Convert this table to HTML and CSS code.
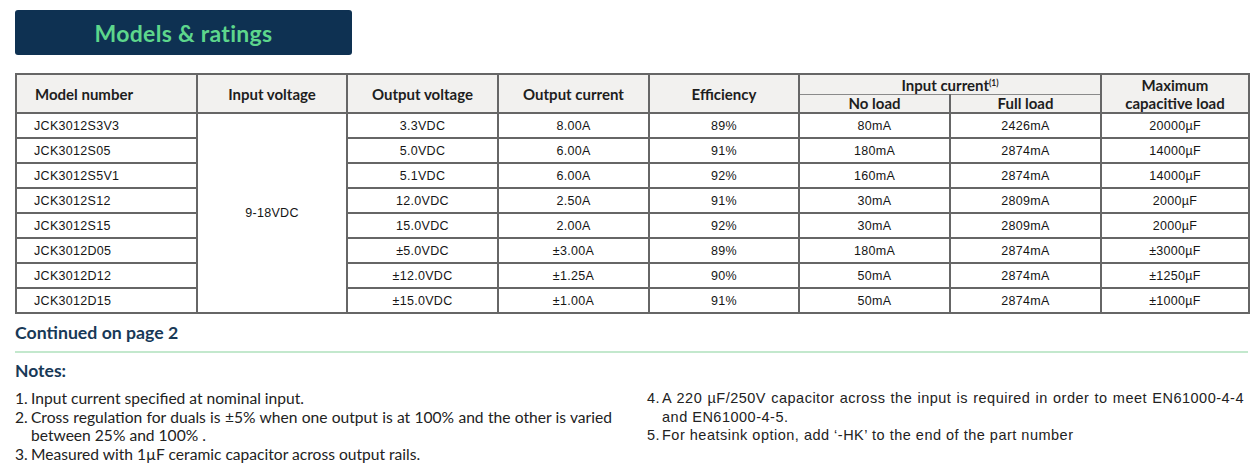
FILE: index.html
```html
<!DOCTYPE html>
<html>
<head>
<meta charset="utf-8">
<link rel="stylesheet" href="styles.css">
</head>
<body>
<div class="page">
  <div class="title">Models &amp; ratings</div>
  <table class="models">
    <colgroup>
      <col class="c1"><col class="c2"><col class="c3"><col class="c4"><col class="c5"><col class="c6"><col class="c7"><col class="c8">
    </colgroup>
    <thead>
      <tr class="h1">
        <th rowspan="2" class="left">Model number</th>
        <th rowspan="2">Input voltage</th>
        <th rowspan="2">Output voltage</th>
        <th rowspan="2">Output current</th>
        <th rowspan="2">Efficiency</th>
        <th colspan="2" class="group">Input current<sup>(1)</sup></th>
        <th rowspan="2" class="maxcap">Maximum<br>capacitive load</th>
      </tr>
      <tr class="h2">
        <th class="sub subl">No load</th>
        <th class="sub">Full load</th>
      </tr>
    </thead>
    <tbody>
      <tr><td class="left">JCK3012S3V3</td><td rowspan="8" class="vin">9-18VDC</td><td>3.3VDC</td><td>8.00A</td><td>89%</td><td>80mA</td><td>2426mA</td><td>20000µF</td></tr>
      <tr><td class="left">JCK3012S05</td><td>5.0VDC</td><td>6.00A</td><td>91%</td><td>180mA</td><td>2874mA</td><td>14000µF</td></tr>
      <tr><td class="left">JCK3012S5V1</td><td>5.1VDC</td><td>6.00A</td><td>92%</td><td>160mA</td><td>2874mA</td><td>14000µF</td></tr>
      <tr><td class="left">JCK3012S12</td><td>12.0VDC</td><td>2.50A</td><td>91%</td><td>30mA</td><td>2809mA</td><td>2000µF</td></tr>
      <tr><td class="left">JCK3012S15</td><td>15.0VDC</td><td>2.00A</td><td>92%</td><td>30mA</td><td>2809mA</td><td>2000µF</td></tr>
      <tr><td class="left">JCK3012D05</td><td>±5.0VDC</td><td>±3.00A</td><td>89%</td><td>180mA</td><td>2874mA</td><td>±3000µF</td></tr>
      <tr><td class="left">JCK3012D12</td><td>±12.0VDC</td><td>±1.25A</td><td>90%</td><td>50mA</td><td>2874mA</td><td>±1250µF</td></tr>
      <tr><td class="left">JCK3012D15</td><td>±15.0VDC</td><td>±1.00A</td><td>91%</td><td>50mA</td><td>2874mA</td><td>±1000µF</td></tr>
    </tbody>
  </table>
  <div class="continued">Continued on page 2</div>
  <div class="rule"></div>
  <div class="notes-title">Notes:</div>
  <div class="notes">
    <ol class="col-a">
      <li><span class="n">1.</span><span class="t">Input current specified at nominal input.</span></li>
      <li><span class="n">2.</span><span class="t">Cross regulation for duals is ±5% when one output is at 100% and the other is varied between 25% and 100% .</span></li>
      <li><span class="n">3.</span><span class="t">Measured with 1µF ceramic capacitor across output rails.</span></li>
    </ol>
    <ol class="col-b">
      <li><span class="n">4.</span><span class="t">A 220 µF/250V capacitor across the input is required in order to meet EN61000-4-4 and EN61000-4-5.</span></li>
      <li><span class="n">5.</span><span class="t">For heatsink option, add ‘-HK’ to the end of the part number</span></li>
    </ol>
  </div>
</div>
</body>
</html>
```
FILE: styles.css
```css
* { box-sizing: border-box; }
html, body { margin: 0; padding: 0; background: #ffffff; }
.page {
  padding: 10px 12px 0 15px;
  font-family: Lato, "Liberation Sans", sans-serif;
  color: #1f1f1f;
}
.title {
  width: 337px;
  height: 45px;
  background: #0e3152;
  border-radius: 3px;
  color: #5dd68c;
  font-family: Lato, sans-serif;
  font-weight: 700;
  font-size: 23px;
  letter-spacing: 0.3px;
  display: flex;
  align-items: center;
  justify-content: center;
}
.models {
  margin-top: 18px;
  width: 1233px;
  border-collapse: collapse;
  table-layout: fixed;
  border: 2px solid #666666;
}
.c1 { width: 181px; }
.c2 { width: 150px; }
.c3 { width: 151px; }
.c4 { width: 151px; }
.c5 { width: 150px; }
.c6 { width: 151px; }
.c7 { width: 151px; }
.c8 { width: 148px; }
.models th {
  background: #f2f1ef;
  font-family: Lato, sans-serif;
  font-weight: 700;
  font-size: 15px;
  color: #1e1e1e;
  border: 2px solid #666666;
  padding: 0;
  text-align: center;
  line-height: 18px;
}
.models .h1 th { height: 18px; }
.models .h2 th { height: 18px; }
.models th.left { text-align: left; padding-left: 18px; }
.models th.group { border-bottom: 1px solid #8a8a8a; vertical-align: bottom; line-height: 18px; }
.models th.sub { border-top: 1px solid #8a8a8a; vertical-align: top; line-height: 17px; }
.models th.subl { border-right: 1px solid #9a9a9a; }
.models th.maxcap { line-height: 18px; padding-top: 1px; }
.models sup { font-size: 8.5px; vertical-align: 5px; line-height: 0; font-weight: 700; }
.models td {
  font-family: "Liberation Sans", Arial, sans-serif;
  font-size: 12.5px;
  letter-spacing: 0.3px;
  color: #151515;
  border: 2px solid #666666;
  height: 25px;
  padding: 0;
  text-align: center;
  vertical-align: middle;
}
.models td.left { text-align: left; padding-left: 17px; }
.continued {
  margin-top: 8px;
  font-family: Lato, sans-serif;
  font-weight: 700;
  font-size: 17.7px;
  color: #183957;
  line-height: 22px;
}
.rule {
  margin-top: 7px;
  width: 1233px;
  height: 2px;
  background: #c3e8cd;
}
.notes-title {
  margin-top: 7px;
  font-family: Lato, sans-serif;
  font-weight: 700;
  font-size: 17.5px;
  color: #183957;
  line-height: 22px;
}
.notes {
  margin-top: 7px;
  display: grid;
  grid-template-columns: 632px 600px;
}
.notes ol {
  margin: 0;
  padding: 0;
  list-style: none;
}
.notes li {
  display: flex;
  line-height: 18.6px;
  color: #222;
}
.notes .t { text-align: justify; }
.col-a li { font-family: Lato, sans-serif; font-size: 15.6px; }
.col-a .n { width: 16px; flex: none; }
.col-a .t { width: 581px; flex: none; }
.col-b li { font-family: "Liberation Sans", Arial, sans-serif; font-size: 14.5px; letter-spacing: 0.5px; }
.col-b .n { width: 15px; flex: none; }
.col-b .t { width: 582px; flex: none; }
```
